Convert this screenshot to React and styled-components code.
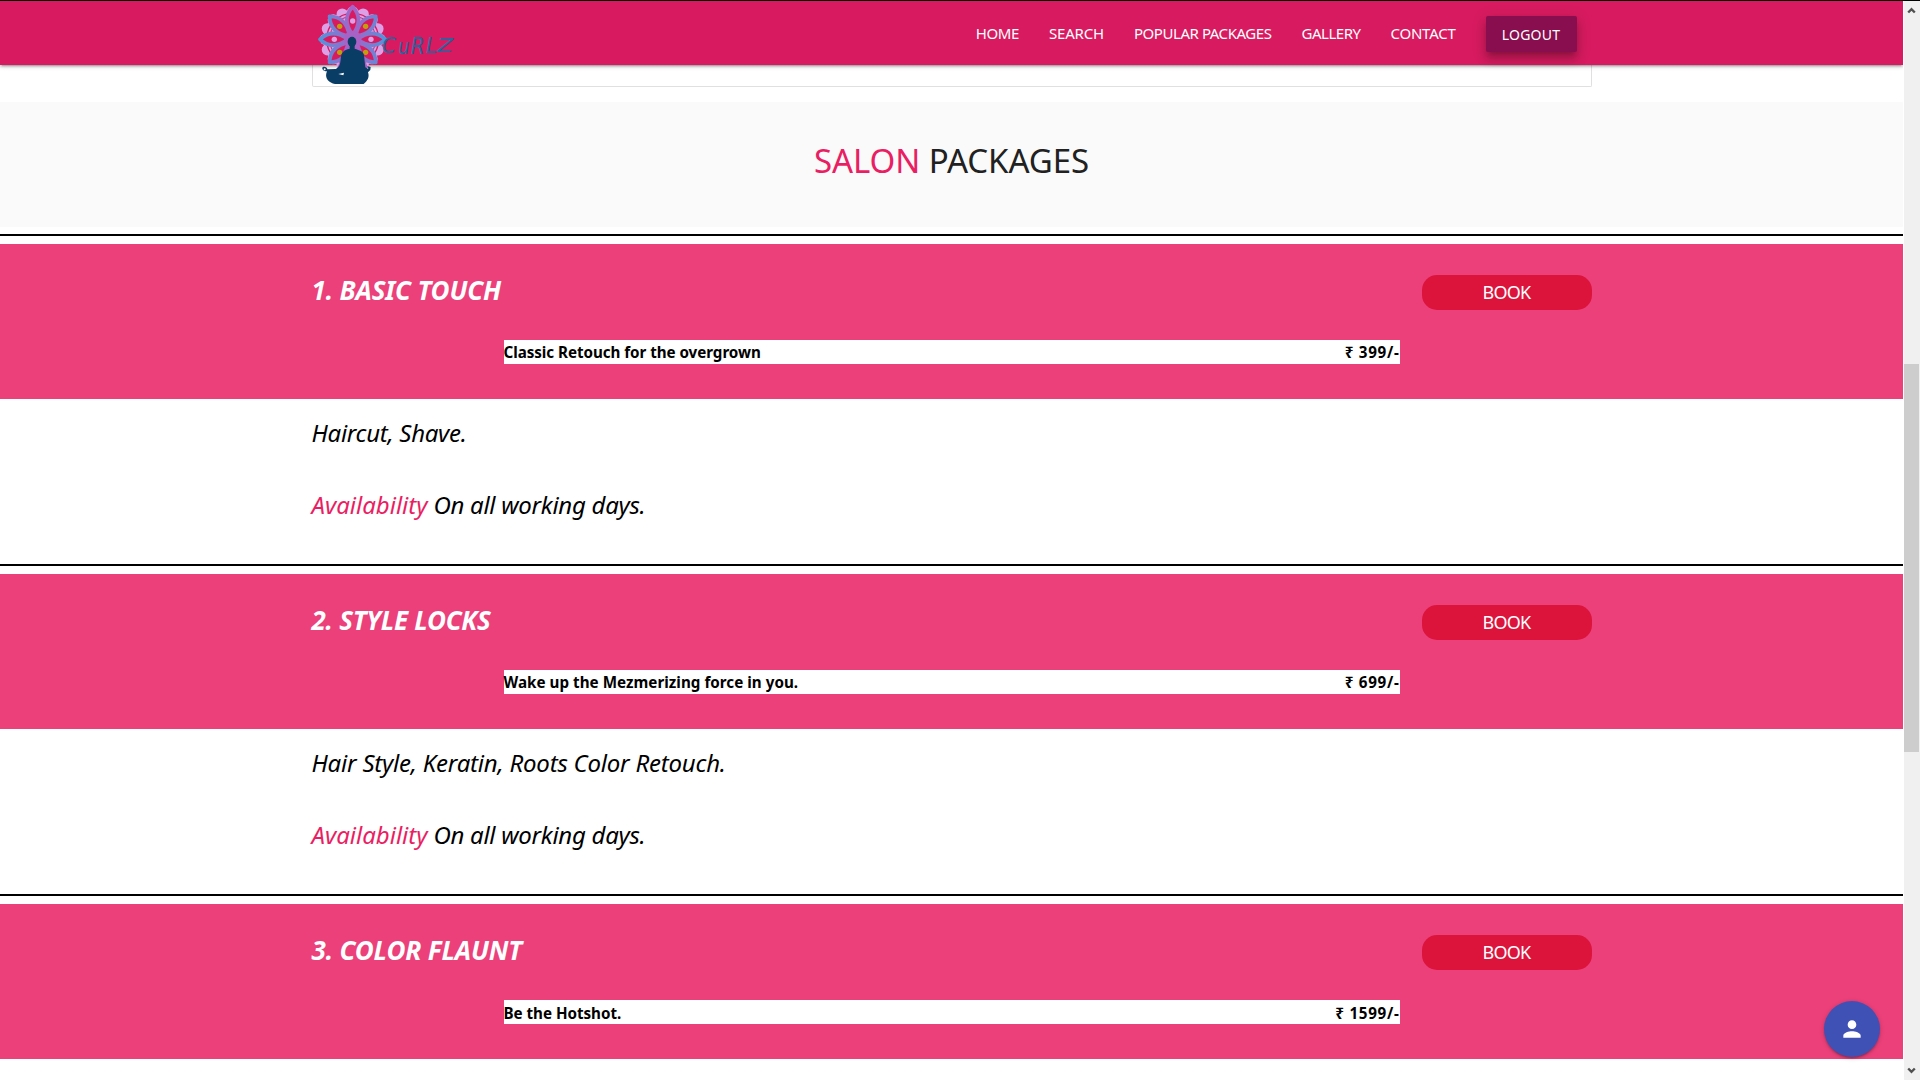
import React from 'react';
import styled, { createGlobalStyle } from 'styled-components';

const GlobalStyle = createGlobalStyle`
  * { box-sizing: border-box; }
  body { margin: 0; background: #fff; overflow: hidden; }
`;

const Shell = styled.div`
  height: 1080px;
  border-top: 1px solid #000;
  display: flex;
  overflow: hidden;
  font-family: "Noto Sans", "Open Sans", sans-serif;
  color: #000;
`;

const Page = styled.div`
  width: 1903px;
  flex: none;
  display: flex;
  flex-direction: column;
  overflow: hidden;
`;

const Container = styled.div`
  width: 1280px;
  margin: 0 auto;
`;

const Text = styled.span`
  letter-spacing: ${(p) => p.$ls || 0}px;
  white-space: nowrap;
`;

/* ---------- navigation ---------- */

const NavBar = styled.header`
  height: 64px;
  flex: none;
  background: #d81b60;
  position: relative;
  z-index: 2;
  box-shadow: 0 2px 2px 0 rgba(0, 0, 0, 0.14), 0 3px 1px -2px rgba(0, 0, 0, 0.12), 0 1px 5px 0 rgba(0, 0, 0, 0.2);
`;

const NavInner = styled(Container)`
  display: flex;
  justify-content: space-between;
  height: 64px;
`;

const LogoLink = styled.a`
  display: block;
  width: 147px;
  height: 64px;
  margin-left: 1.5px;
  svg { display: block; overflow: visible; }
`;

const Links = styled.nav`
  display: flex;
  font-size: 15px;
  line-height: 64px;
  color: #fff;
`;

const NavLink = styled.a`
  padding: 0 15px;
`;

const LogoutButton = styled.a`
  width: 91px;
  height: 36px;
  margin: 15px 15px 0;
  border-radius: 2px;
  background: #880e4f;
  font-size: 14px;
  line-height: 37px;
  text-align: center;
  box-shadow: 0 8px 10px 1px rgba(0, 0, 0, 0.14), 0 3px 14px 2px rgba(0, 0, 0, 0.12), 0 5px 5px -3px rgba(0, 0, 0, 0.2);
`;

/* ---------- sections ---------- */

const CardEnd = styled(Container)`
  height: 22px;
  flex: none;
  border: 1px solid #e0e0e0;
  border-top: 0;
  border-radius: 0 0 2px 2px;
`;

const Banner = styled.section`
  height: 125px;
  flex: none;
  margin: 15px 0 7px;
  background: #fafafa;
  display: flex;
  justify-content: center;
  padding-top: 38px;
`;

const BannerTitle = styled.h4`
  margin: 0;
  font-weight: 400;
  font-size: 33px;
  line-height: 42px;
  letter-spacing: -0.08px;
  color: #212121;
`;

const Accent = styled.span`
  color: #e91e63;
`;

const Package = styled.article`
  height: 330px;
  flex: none;
  border-top: 2px solid #000;
  padding-top: 8px;
`;

const PackageHead = styled.div`
  height: 155px;
  background: #ec407a;
`;

const TitleRow = styled(Container)`
  height: 96px;
  display: flex;
  justify-content: space-between;
  align-items: flex-start;
`;

const PackageTitle = styled.h5`
  margin: 28px 0 0;
  font-size: 26px;
  line-height: 36px;
  font-weight: 700;
  font-style: italic;
  color: #fff;
`;

const BookButton = styled.button`
  width: 170px;
  height: 35px;
  margin: 31px 0 0;
  padding: 0;
  border: 0;
  border-radius: 15px;
  background: #dc143c;
  color: #fff;
  font: 400 18px/35px "Noto Sans", sans-serif;
`;

const PriceRow = styled.div`
  width: 896px;
  height: 24px;
  margin: 0 auto;
  display: flex;
  justify-content: space-between;
  background: #fff;
  font-size: 15.2px;
  line-height: ${(p) => (p.$low ? 26 : 24)}px;
  font-weight: 700;
`;

const Details = styled(Container)`
  padding-top: 16px;
  display: flex;
  flex-direction: column;
  gap: 36px;
  font-size: 24px;
  line-height: 36px;
  font-style: italic;
`;

const Line = styled.div`
  display: flex;
  gap: 6px;
`;

/* ---------- overlays ---------- */

const Fab = styled.button`
  position: fixed;
  left: 1824px;
  top: 1001px;
  width: 56px;
  height: 56px;
  padding: 0;
  border: 0;
  border-radius: 50%;
  background: #3f51b5;
  display: flex;
  align-items: center;
  justify-content: center;
  z-index: 3;
  box-shadow: 0 2px 2px 0 rgba(0, 0, 0, 0.14), 0 3px 1px -2px rgba(0, 0, 0, 0.12), 0 1px 5px 0 rgba(0, 0, 0, 0.2);
`;

const ScrollTrack = styled.aside`
  width: 17px;
  height: 1079px;
  border-left: 1px solid #fff;
  background: #f0f0f0;
  display: flex;
  flex-direction: column;
  padding-right: 1px;
`;

const Arrow = styled.svg`
  display: block;
  flex: none;
  width: 15px;
  height: 17px;
  transform: ${(p) => (p.$down ? 'rotate(180deg)' : 'none')};
`;

const Thumb = styled.div`
  height: 388px;
  margin: 346px 0 auto;
  background: #cdcdcd;
`;

const petals = [45, 135, 225, 315, 0, 90, 180, 270];

function Logo() {
  const scallops = Array.from({ length: 16 }, (_, i) => {
    const a = (i * 22.5 * Math.PI) / 180;
    return [159 + 82 * Math.cos(a), 118 + 82 * Math.sin(a)];
  });
  return (
    <svg width="147" height="87" viewBox="40 3 441 261">
      <defs>
        <linearGradient id="petal" gradientUnits="userSpaceOnUse" x1="55" y1="118" x2="263" y2="118">
          <stop offset="0" stopColor="#4a98de" />
          <stop offset="0.5" stopColor="#a862c6" />
          <stop offset="1" stopColor="#4a98de" />
        </linearGradient>
        <clipPath id="bloom"><rect x="40" y="3" width="240" height="202" /></clipPath>
      </defs>
      <g clipPath="url(#bloom)">
        {scallops.map(([x, y]) => <circle key={`${x}-${y}`} cx={x} cy={y} r="17" fill="#dca0e6" />)}
        <circle cx="159" cy="118" r="88" fill="#dca0e6" />
        <circle cx="159" cy="118" r="78" fill="none" stroke="#d81b60" strokeWidth="4" />
        <circle cx="159" cy="118" r="69" fill="none" stroke="#d81b60" strokeWidth="3" />
        {petals.map((a) => {
          const r = (a * Math.PI) / 180;
          const s = Math.sin(r);
          const c = Math.cos(r);
          const at = (x, y) => `${159 + x * c - y * s},${118 + x * s + y * c}`;
          return (
            <path
              key={a}
              d={`M${at(0, -14)} C${at(-18, -38)} ${at(-28, -68)} ${at(0, -98)} C${at(28, -68)} ${at(18, -38)} ${at(0, -14)}Z`}
              fill="#d81b60"
              stroke="url(#petal)"
              strokeWidth="11"
              strokeLinejoin="round"
            />
          );
        })}
        {petals.map((a, i) => {
          const r = (a * Math.PI) / 180;
          return <circle key={a} cx={159 + 55 * Math.sin(r)} cy={118 - 55 * Math.cos(r)} r="8" fill={i < 4 ? '#bfa00c' : '#dca0e6'} />;
        })}
        <circle cx="159" cy="118" r="26" fill="#a862c6" />
        <path d="M140 130H178L205 205H113Z" fill="#a862c6" />
      </g>
      <g fill="#0a3d66">
        <ellipse cx="157" cy="125" rx="13" ry="15" />
        <path d="M150 132H165V146C180 151 191 153 193 166L197 202L206 207L203 198L213 201L212 210L205 217C210 232 204 242 192 252H106C88 249 76 236 80 220L82 214C72 215 65 207 69 202C75 198 83 203 83 208L108 207C120 202 122 190 123 178C124 157 132 150 150 146Z" />
      </g>
      <path d="M116 222L133 218L131 226Z" fill="#fff" />
      <circle cx="75" cy="208" r="3" fill="#fff" />
      <g fill="#2c639e" fontFamily="DejaVu Sans" fontWeight="200" fontStyle="italic">
        <text x="247" y="160" fontSize="62" textLength="42" lengthAdjust="spacingAndGlyphs">C</text>
        <text x="296" y="163" fontSize="62" textLength="34" lengthAdjust="spacingAndGlyphs">u</text>
        <text x="333" y="163" fontSize="68" textLength="42" lengthAdjust="spacingAndGlyphs">R</text>
        <text x="379" y="160" fontSize="64" textLength="34" lengthAdjust="spacingAndGlyphs">L</text>
        <text x="413" y="157" fontSize="56" textLength="48" lengthAdjust="spacingAndGlyphs">Z</text>
      </g>
    </svg>
  );
}

const links = [
  ['HOME', -0.4],
  ['SEARCH', -0.2],
  ['POPULAR PACKAGES', -0.44],
  ['GALLERY', -0.48],
  ['CONTACT', -0.25],
];

const packages = [
  { title: '1. BASIC TOUCH', tls: -0.17, tag: 'Classic Retouch for the overgrown', gls: -0.05, price: '₹ 399/-', items: 'Haircut, Shave.', ils: -0.28 },
  { title: '2. STYLE LOCKS', tls: -0.27, tag: 'Wake up the Mezmerizing force in you.', gls: 0.03, price: '₹ 699/-', items: 'Hair Style, Keratin, Roots Color Retouch.', ils: -0.21 },
  { title: '3. COLOR FLAUNT', tls: -0.17, tag: 'Be the Hotshot.', gls: -0.03, price: '₹ 1599/-' },
];

export default function App() {
  return (
    <>
      <GlobalStyle />
      <Shell>
        <Page>
          <NavBar>
            <NavInner>
              <LogoLink><Logo /></LogoLink>
              <Links>
                {links.map(([label, ls]) => (
                  <NavLink key={label}><Text $ls={ls}>{label}</Text></NavLink>
                ))}
                <LogoutButton><Text $ls={0.2}>LOGOUT</Text></LogoutButton>
              </Links>
            </NavInner>
          </NavBar>
          <CardEnd />
          <Banner>
            <BannerTitle><Accent>SALON</Accent> PACKAGES</BannerTitle>
          </Banner>
          {packages.map((p) => (
            <Package key={p.title}>
              <PackageHead>
                <TitleRow>
                  <PackageTitle><Text $ls={p.tls}>{p.title}</Text></PackageTitle>
                  <BookButton><Text $ls={-0.7}>BOOK</Text></BookButton>
                </TitleRow>
                <PriceRow $low={!p.items}>
                  <Text $ls={p.gls}>{p.tag}</Text>
                  <Text $ls={0.7}>{p.price}</Text>
                </PriceRow>
              </PackageHead>
              {p.items && (
                <Details>
                  <Text $ls={p.ils}>{p.items}</Text>
                  <Line>
                    <Accent><Text>Availability</Text></Accent>
                    <Text $ls={-0.28}>On all working days.</Text>
                  </Line>
                </Details>
              )}
            </Package>
          ))}
        </Page>
        <ScrollTrack>
          <Arrow viewBox="0 0 15 17"><path d="M4.2 11.5 7.5 8.2 10.8 11.5" fill="none" stroke="#505050" strokeWidth="2.4" /></Arrow>
          <Thumb />
          <Arrow $down viewBox="0 0 15 17"><path d="M4.2 11.5 7.5 8.2 10.8 11.5" fill="none" stroke="#505050" strokeWidth="2.4" /></Arrow>
        </ScrollTrack>
        <Fab aria-label="Account">
          <svg width="26" height="26" viewBox="0 0 24 24" fill="#fff">
            <path d="M12 12c2.21 0 4-1.79 4-4s-1.79-4-4-4-4 1.79-4 4 1.79 4 4 4zm0 2c-2.67 0-8 1.34-8 4v2h16v-2c0-2.66-5.33-4-8-4z" />
          </svg>
        </Fab>
      </Shell>
    </>
  );
}
